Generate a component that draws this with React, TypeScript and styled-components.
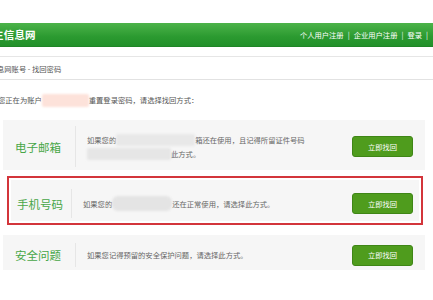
import styled, { createGlobalStyle } from "styled-components";

const GlobalStyle = createGlobalStyle`
  html, body {
    margin: 0;
    padding: 0;
    background: #ffffff;
    overflow: hidden;
  }
  body {
    font-family: "Noto Sans CJK SC", "Noto Sans", sans-serif;
    color: #666666;
  }
`;

const methods = [
  {
    title: "电子邮箱",
    height: 50,
    padTop: 3,
    highlight: false,
  },
  {
    title: "手机号码",
    height: 41,
    padTop: 6,
    highlight: true,
  },
  {
    title: "安全问题",
    height: 35,
    padTop: 5,
    highlight: false,
  },
];

export default function App() {
  return (
    <>
      <GlobalStyle />
      <Page>
        <TopSpace />
        <Header>
          <SiteTitle>生信息网</SiteTitle>
          <Nav>
            <NavLink>个人用户注册</NavLink>
            <Sep>|</Sep>
            <NavLink>企业用户注册</NavLink>
            <Sep>|</Sep>
            <NavLink>登录</NavLink>
            <Sep>|</Sep>
          </Nav>
        </Header>
        <Spacer />
        <Breadcrumb>
          <Clipped $shift={3}>息网账号 - 找回密码</Clipped>
        </Breadcrumb>
        <Intro>
          <Clipped $shift={2}>您正在为账户</Clipped>
          <Blur $width={47} $height={13} $color="#fde2da" />
          <span>重置登录密码，请选择找回方式：</span>
        </Intro>
        <List>
          {methods.map((m) => {
            const card = (
              <Card $height={m.height} $padTop={m.padTop}>
                <Label>{m.title}</Label>
                <Desc>
                  {m.title === "电子邮箱" && (
                    <>
                      <Line>
                        如果您的
                        <Blur $width={79} $height={12} $color="#e8e8e8" />
                        箱还在使用，且记得所留证件号码
                      </Line>
                      <Line>
                        <Blur $width={84} $height={12} $color="#e6e6e6" />
                        此方式。
                      </Line>
                    </>
                  )}
                  {m.title === "手机号码" && (
                    <Line>
                      如果您的
                      <Blur $width={60} $height={15} $color="#e4e4e4" $round />
                      还在正常使用，请选择此方式。
                    </Line>
                  )}
                  {m.title === "安全问题" && (
                    <Line>如果您记得预留的安全保护问题，请选择此方式。</Line>
                  )}
                </Desc>
                <Button>立即找回</Button>
              </Card>
            );
            return m.highlight ? (
              <Highlight key={m.title}>{card}</Highlight>
            ) : (
              <div key={m.title}>{card}</div>
            );
          })}
        </List>
      </Page>
    </>
  );
}

const Page = styled.div`
  width: 433px;
  height: 300px;
  overflow: hidden;
  font-size: 7.3px;
`;

const TopSpace = styled.div`
  height: 23px;
`;

const Header = styled.div`
  height: 23px;
  display: flex;
  align-items: center;
  justify-content: space-between;
  background: linear-gradient(#4cb34a, #2b9a30 60%, #22902a);
  border-bottom: 1px solid #1f8526;
`;

const SiteTitle = styled.div`
  margin-left: -7px;
  color: #ffffff;
  font-size: 10.5px;
  font-weight: bold;
  letter-spacing: 0.2px;
`;

const Nav = styled.div`
  display: flex;
  align-items: center;
  color: #ffffff;
  font-size: 7.3px;
  padding-right: 1px;
`;

const NavLink = styled.span``;

const Sep = styled.span`
  margin: 0 4px;
`;

const Spacer = styled.div`
  height: 9px;
  border-bottom: 1px solid #e6e6e6;
`;

const Breadcrumb = styled.div`
  height: 23px;
  padding-top: 1px;
  box-sizing: border-box;
  display: flex;
  align-items: center;
  color: #555555;
  border-bottom: 1px solid #e2e2e2;
`;

const Clipped = styled.span<{ $shift: number }>`
  margin-left: -${(p) => p.$shift}px;
`;

const Intro = styled.div`
  height: 40px;
  display: flex;
  align-items: center;
  color: #555555;
`;

const Blur = styled.span<{
  $width: number;
  $height: number;
  $color: string;
  $round?: boolean;
}>`
  display: inline-block;
  vertical-align: middle;
  width: ${(p) => p.$width}px;
  height: ${(p) => p.$height}px;
  background: ${(p) => p.$color};
  border-radius: ${(p) => (p.$round ? "6px" : "2px")};
  filter: blur(1px);
`;

const List = styled.div`
  display: flex;
  flex-direction: column;
  gap: 6px;
  padding: 0 8px 0 3px;

  & > :last-child {
    margin-top: 4px;
  }
`;

const Highlight = styled.div`
  border: 2px solid #d3353b;
  padding: 2px;
  margin: 0 2px 0 4px;
`;

const Card = styled.div<{ $height: number; $padTop: number }>`
  height: ${(p) => p.$height}px;
  box-sizing: border-box;
  padding-top: ${(p) => p.$padTop}px;
  display: flex;
  align-items: center;
  background: #f6f6f6;
`;

const Label = styled.div`
  width: 60px;
  padding-left: 12px;
  align-self: stretch;
  margin: 3px 0;
  display: flex;
  align-items: center;
  color: #47a647;
  font-size: 11.5px;
  border-right: 1px solid #e6e6e6;
  ${Highlight} & {
    width: 54px;
    padding-left: 6px;
  }
`;

const Desc = styled.div`
  flex: 1;
  margin-left: 11px;
  color: #666666;
  display: flex;
  flex-direction: column;
  gap: 2px;
`;

const Line = styled.div`
  display: flex;
  align-items: center;
  min-height: 12px;
  white-space: nowrap;
`;

const Button = styled.button`
  width: 61px;
  height: 21px;
  margin-right: 12px;
  padding: 0;
  border: 1px solid #3f8616;
  border-radius: 3px;
  background: #4f9c1d;
  color: #ffffff;
  font-family: "Noto Sans CJK SC", sans-serif;
  font-size: 7.3px;
  ${Highlight} & {
    margin-right: 6px;
  }
`;
